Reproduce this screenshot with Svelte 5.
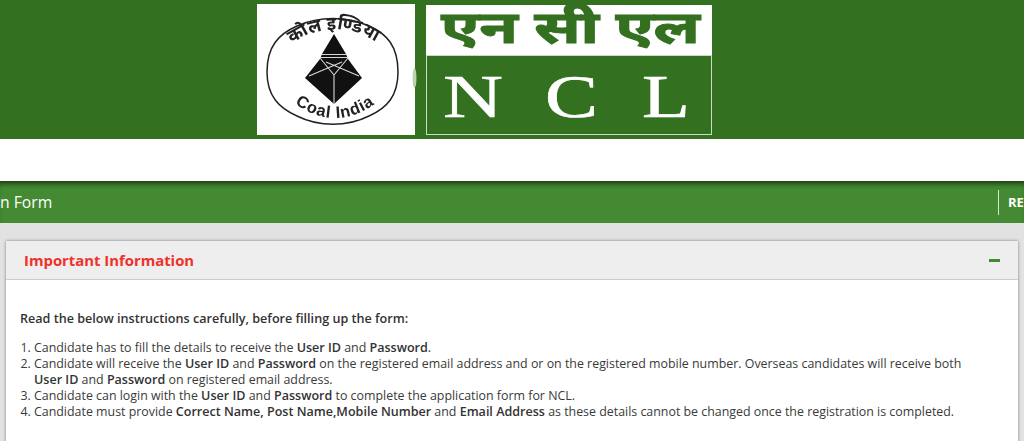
<script>
  const items = [
    [['Candidate has to fill the details to receive the '], ['User ID', 1], [' and '], ['Password', 1], ['.']],
    [['Candidate will receive the '], ['User ID', 1], [' and '], ['Password', 1], [' on the registered email address and or on the registered mobile number. Overseas candidates will receive both '], ['User ID', 1], [' and '], ['Password', 1], [' on registered email address.']],
    [['Candidate can login with the '], ['User ID', 1], [' and '], ['Password', 1], [' to complete the application form for NCL.']],
    [['Candidate must provide '], ['Correct Name, Post Name,Mobile Number', 1], [' and '], ['Email Address', 1], [' as these details cannot be changed once the registration is completed.']]
  ];
</script>

<header class="top">
  <svg class="logo" viewBox="0 0 456 132" width="456" height="132" role="img" aria-label="Coal India NCL">
    <rect x="0" y="0" width="158" height="131" fill="#fff" />
    <ellipse cx="157.5" cy="74" rx="2" ry="10" fill="#b8d3ad" />
    <path d="M10 68 C10 42 22 30 40 22 C62 12 90 12 112 22 C130 30 141 42 141 68 C141 92 130 104 112 112 C90 123 62 123 40 112 C22 104 10 92 10 68 Z" fill="none" stroke="#222" stroke-width="1.5" />
    <defs>
      <path id="arc-top" d="M22 62 C30 16 122 12 132 60" />
      <path id="arc-bot" d="M24 88 Q78 140 132 88" />
    </defs>
    <text class="emblem-hi"><textPath href="#arc-top" startOffset="50%" text-anchor="middle">कोल इण्डिया</textPath></text>
    <text class="emblem-en"><textPath href="#arc-bot" startOffset="50%" text-anchor="middle">Coal India</textPath></text>
    <polygon points="77,30 65,50 63,55 48,74 77,100 105,74 91,55 89,50" fill="#111" />
    <path d="M64 50.5 L90 50.5 M63 53.5 L91 53.5 M63 54 L77 71 L91 54 M52 72 L85 58 M102 72 L69 58 M77 71 L77 100" fill="none" stroke="#d8d8d8" stroke-width="1.1" />

    <rect x="169" y="1" width="286" height="50" fill="#fff" />
    <text class="hindi" x="184" y="39" textLength="259" lengthAdjust="spacingAndGlyphs">एन सी एल</text>
    <rect x="169.5" y="51.5" width="285" height="79" fill="#33701f" stroke="#c9dcc4" />
    <text class="ncl" x="186" y="113" textLength="60" lengthAdjust="spacingAndGlyphs">N</text>
    <text class="ncl" x="288" y="113" textLength="53" lengthAdjust="spacingAndGlyphs">C</text>
    <text class="ncl" x="385" y="113" textLength="48" lengthAdjust="spacingAndGlyphs">L</text>
  </svg>
</header>

<div class="gap"></div>

<nav class="bar">
  <span class="title">n Form</span>
  <span class="link">RE</span>
</nav>

<main class="page">
  <section class="panel">
    <div class="panel-head">
      <h2>Important Information</h2>
      <span class="minus"></span>
    </div>
    <div class="panel-body">
      <p>Read the below instructions carefully, before filling up the form:</p>
      <ol>
        {#each items as parts}
          <li>{#each parts as p}{#if p[1]}<b>{p[0]}</b>{:else}{p[0]}{/if}{/each}</li>
        {/each}
      </ol>
    </div>
  </section>
</main>

<style>
  :global(body) {
    margin: 0;
    background: #e2e2e2;
    font-family: "Open Sans", "Noto Sans", sans-serif;
    height: 441px;
    overflow: hidden;
  }
  .top {
    background: #33701f;
    height: 139px;
    padding: 4px 0 0 257px;
    box-sizing: border-box;
  }
  .logo {
    display: block;
    filter: blur(0.5px);
  }
  .emblem-hi {
    font: 700 18px "Noto Sans", "Noto Sans Devanagari", "DejaVu Sans", sans-serif;
    fill: #222;
  }
  .emblem-en {
    font: 700 16.5px "Liberation Sans", sans-serif;
    letter-spacing: 0.8px;
    fill: #222;
  }
  .hindi {
    font: 700 44px "Noto Sans", "Noto Sans Devanagari", "DejaVu Sans", sans-serif;
    fill: #33701f;
    stroke: #33701f;
    stroke-width: 1px;
  }
  .ncl {
    font: 400 61px "Liberation Serif", serif;
    fill: #fff;
    stroke: #fff;
    stroke-width: 0.6px;
  }
  .gap {
    height: 42px;
    background: #fff;
  }
  .bar {
    height: 42px;
    background: #438a32;
    box-shadow: inset 0 6px 5px -3px rgba(0, 0, 0, 0.55);
    display: flex;
    align-items: center;
    justify-content: space-between;
    color: #fff;
  }
  .title {
    font-size: 15.7px;
  }
  .link {
    width: 26px;
    height: 25px;
    line-height: 25px;
    border-left: 1px solid #d8e4d4;
    padding-left: 9px;
    box-sizing: border-box;
    font-size: 13px;
    font-weight: 700;
    overflow: hidden;
  }
  .page {
    padding: 18px 6px 0;
  }
  .panel {
    background: #fff;
    box-shadow: 0 0 3px rgba(0, 0, 0, 0.45);
    height: 220px;
  }
  .panel-head {
    height: 39px;
    background: #eee;
    border-bottom: 1px solid #ccc;
    box-sizing: border-box;
    display: flex;
    align-items: center;
    justify-content: space-between;
    padding: 0 18px;
  }
  h2 {
    margin: 0;
    font-size: 14.85px;
    font-weight: 700;
    color: #f0312a;
  }
  .minus {
    width: 11px;
    height: 3px;
    background: #438a32;
  }
  .panel-body {
    padding: 31px 40px 0 14px;
    font-size: 12.4px;
    line-height: 16px;
    color: #3a3a3a;
  }
  p {
    margin: 0 0 13px;
    font-size: 12.6px;
    font-weight: 600;
    color: #333;
  }
  ol {
    margin: 0;
    padding: 0 0 0 14px;
  }
  b {
    font-size: 12.55px;
    font-weight: 600;
    color: #333;
  }
</style>
